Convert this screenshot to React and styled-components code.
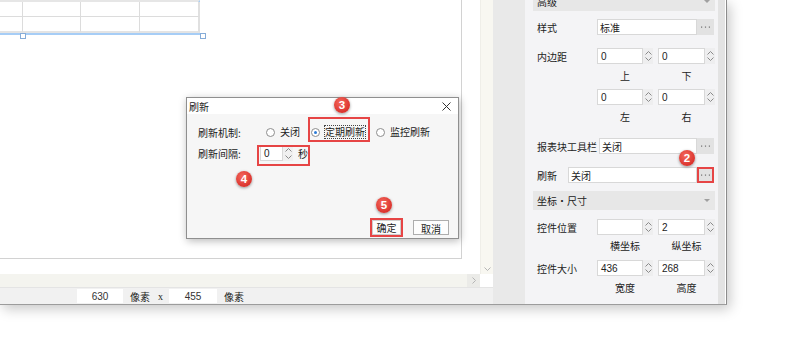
import React from 'react';
import styled, { createGlobalStyle } from 'styled-components';

const Global = createGlobalStyle`
  html, body { margin: 0; padding: 0; background: #fff; }
  body {
    font-family: "Noto Sans CJK SC", "Noto Sans", sans-serif;
    font-size: 10px;
    color: #222;
  }
  #root { width: 789px; height: 361px; overflow: hidden; position: relative; }
`;

const Window = styled.div`
  position: relative;
  display: flex;
  width: 727px;
  height: 305px;
  box-sizing: border-box;
  border-right: 1px solid #8c8c8c;
  border-bottom: 1px solid #9c9c9c;
  box-shadow: 3px 4px 12px rgba(0, 0, 0, 0.22);
  background: #fff;
`;

/* ---------- work area ---------- */
const Work = styled.div`
  width: 493px;
  display: flex;
  flex-direction: column;
`;
const WorkTop = styled.div`
  display: flex;
  height: 274px;
`;
const CanvasArea = styled.div`
  width: 480px;
  background: #fff;
`;
const CanvasBox = styled.div`
  position: relative;
  width: 462px;
  height: 259px;
  box-sizing: border-box;
  border-right: 1px solid #d2d2d2;
  border-bottom: 1px solid #d2d2d2;
`;
const VScroll = styled.div`
  width: 13px;
  box-sizing: border-box;
  background: #f8f7f1;
  border-left: 1px solid #efeee8;
  display: flex;
  flex-direction: column;
  justify-content: flex-end;
`;
const ScrollBtn = styled.div`
  height: ${p => p.$h || 11}px;
  width: ${p => p.$w ? p.$w + 'px' : 'auto'};
  display: flex;
  align-items: center;
  justify-content: center;
  background: ${p => p.$bg || 'transparent'};
`;
const HScrollRow = styled.div`
  display: flex;
  height: 13px;
`;
const HTrack = styled.div`
  width: 480px;
  background: #f4f4ef;
  display: flex;
  justify-content: flex-end;
`;
const Corner = styled.div`
  width: 13px;
  background: #fff;
`;
const StatusBar = styled.div`
  height: 17px;
  box-sizing: border-box;
  border-top: 1px solid #e4e4e4;
  background: #f1f1f1;
  display: flex;
  align-items: center;
  padding-left: 77px;
`;
const NumBox = styled.div`
  width: ${p => p.$w}px;
  height: 14px;
  background: #fff;
  font-family: "Liberation Sans", Arial, sans-serif;
  font-size: 10px;
  color: #333;
  display: flex;
  align-items: center;
  justify-content: center;
`;
const StatusText = styled.span`
  margin-left: ${p => p.$ml}px;
  font-family: ${p => p.$serif ? '"Liberation Serif", serif' : 'inherit'};
  color: #222;
`;

/* ---------- table widget on canvas ---------- */
const TableWrap = styled.div`
  position: relative;
  width: 200px;
`;
const Table = styled.div`
  display: grid;
  grid-template-columns: 23px 58px 59px 60px;
  grid-template-rows: 15px 16px;
  border-top: 2px solid #e6e6e6;
  border-right: 2px solid #a6cdf6;
  border-bottom: 2px solid #a6cdf6;
`;
const Cell = styled.div`
  box-sizing: border-box;
  border-right: ${p => p.$last ? '2px solid #e0e0e0' : '1px solid #dcdcdc'};
  border-bottom: ${p => p.$bottom ? '2px solid #e4e4e4' : '1px solid #dcdcdc'};
`;
const Handle = styled.div`
  position: absolute;
  left: ${p => p.$x}px;
  top: ${p => p.$y}px;
  width: 4px;
  height: 4px;
  border: 1px solid #86acd8;
  background: #fff;
`;

/* ---------- gray gutter & property panel ---------- */
const Gutter = styled.div`
  width: 32px;
  background: #e9e9e9;
`;
const Panel = styled.div`
  width: 193px;
  box-sizing: border-box;
  padding: 0 3px 0 8px;
  background: #f4f4f6;
  overflow: hidden;
`;
const PanelScroll = styled.div`
  width: 7px;
  background: #e3e3e3;
`;
const SectionHead = styled.div`
  margin-top: ${p => p.$mt}px;
  height: 19px;
  background: #e7e7e7;
  display: flex;
  align-items: center;
  justify-content: space-between;
  padding: 0 5px 0 4px;
  color: #222;
`;
const Tri = styled.span`
  width: 0;
  height: 0;
  border-left: 3px solid transparent;
  border-right: 3px solid transparent;
  border-top: 3px solid #a0a0a0;
`;
const Row = styled.div`
  margin-top: ${p => p.$mt}px;
  height: 16px;
  display: flex;
  align-items: center;
  padding-left: 4px;
`;
const Label = styled.span`
  width: ${p => p.$w}px;
  flex: none;
  white-space: nowrap;
  color: #222;
`;
const TextField = styled.div`
  width: ${p => p.$w}px;
  flex: none;
  height: 16px;
  box-sizing: border-box;
  background: #fff;
  border: 1px solid #d8d8d8;
  display: flex;
  align-items: center;
  padding-left: 2px;
  color: #222;
`;
const DotsBtn = styled.div`
  width: 17px;
  height: 16px;
  flex: none;
  box-sizing: border-box;
  background: #e2e2e2;
  border: ${p => p.$hl ? '2px solid #e64545' : 'none'};
  display: flex;
  align-items: center;
  justify-content: center;
`;
const SpinPair = styled.div`
  display: flex;
  gap: 5px;
`;
const SpinBox = styled.div`
  width: ${p => p.$w}px;
  height: ${p => p.$h || 16}px;
  display: flex;
`;
const SpinField = styled.div`
  flex: 1;
  box-sizing: border-box;
  background: #fff;
  border: 1px solid #d8d8d8;
  display: flex;
  align-items: center;
  padding-left: 3px;
  font-family: "Liberation Sans", Arial, sans-serif;
  font-size: 10px;
  color: #222;
`;
const SpinArrows = styled.div`
  width: 10px;
  display: flex;
  flex-direction: column;
  align-items: center;
  justify-content: space-evenly;
  background: ${p => p.$bg || '#eeeeef'};
`;
const SubRow = styled.div`
  margin-top: ${p => p.$mt}px;
  height: 12px;
  display: flex;
  gap: 5px;
  padding-left: 64px;
  align-items: center;
`;
const Sub = styled.span`
  width: ${p => p.$w}px;
  text-align: center;
  color: #222;
`;

/* ---------- dialog ---------- */
const Dialog = styled.div`
  position: absolute;
  left: 186px;
  top: 97px;
  width: 273px;
  height: 142px;
  box-sizing: border-box;
  border: 1px solid #8f8f8f;
  box-shadow: 1px 2px 8px rgba(0, 0, 0, 0.28);
  display: flex;
  flex-direction: column;
  background: #f6f6f6;
`;
const TitleBar = styled.div`
  height: 16px;
  background: #fff;
  display: flex;
  align-items: center;
  justify-content: space-between;
  padding: 0 7px 0 2px;
`;
const DBody = styled.div`
  flex: 1;
  display: flex;
  flex-direction: column;
  padding-left: 11px;
`;
const DRow = styled.div`
  margin-top: ${p => p.$mt}px;
  height: ${p => p.$h}px;
  display: flex;
  align-items: center;
`;
const RadioGroup = styled.div`
  display: flex;
  gap: 10px;
  align-items: center;
`;
const RadioItem = styled.label`
  display: flex;
  align-items: center;
  gap: 4px;
`;
const RadioCircle = styled.span`
  width: 9px;
  height: 9px;
  box-sizing: border-box;
  border-radius: 50%;
  border: 1px solid #8d8d8d;
  background: #fff;
  display: flex;
  align-items: center;
  justify-content: center;
  &::after {
    content: "";
    display: ${p => p.$on ? 'block' : 'none'};
    width: 3px;
    height: 3px;
    border-radius: 50%;
    background: #2b7bd6;
  }
`;
const RadioText = styled.span`
  padding: 0;
  border: 1px ${p => p.$focus ? 'dotted #444' : 'solid transparent'};
  line-height: 12px;
`;
const Unit = styled.span`
  margin-left: 5px;
`;
const Footer = styled.div`
  margin-top: auto;
  display: flex;
  justify-content: flex-end;
  align-items: center;
  gap: 10px;
  padding: 0 9px 1px 0;
`;
const Button = styled.button`
  font-family: inherit;
  font-size: 10px;
  color: #222;
  background: #fdfdfd;
  width: ${p => p.$w}px;
  height: ${p => p.$h}px;
  padding: 0;
  box-sizing: border-box;
  border: ${p => p.$hl ? '2px solid #e64545' : '1px solid #adadad'};
  box-shadow: ${p => p.$hl ? 'inset 0 0 0 1px #cfcfcf' : 'none'};
`;

/* ---------- annotations ---------- */
const Highlight = styled.div`
  position: absolute;
  left: ${p => p.$x}px;
  top: ${p => p.$y}px;
  width: ${p => p.$w}px;
  height: ${p => p.$h}px;
  box-sizing: border-box;
  border: 2px solid #e64545;
  pointer-events: none;
`;
const Badge = styled.div`
  position: absolute;
  left: ${p => p.$x - 8}px;
  top: ${p => p.$y - 8}px;
  width: 16px;
  height: 16px;
  border-radius: 50%;
  background: radial-gradient(circle at 40% 35%, #f4685d, #d9302a 75%);
  box-shadow: 0 1px 3px rgba(0, 0, 0, 0.4);
  color: #fff;
  font-family: "Liberation Sans", Arial, sans-serif;
  font-weight: bold;
  font-size: 11.5px;
  display: flex;
  align-items: center;
  justify-content: center;
`;

const Chevron = ({ up, color = '#8a8a8a' }) => (
  <svg width="7" height="4" viewBox="0 0 7 4">
    <path d={up ? 'M0.5 3.5 L3.5 0.5 L6.5 3.5' : 'M0.5 0.5 L3.5 3.5 L6.5 0.5'} fill="none" stroke={color} strokeWidth="1" />
  </svg>
);

const Dots = () => (
  <svg width="9" height="2" viewBox="0 0 9 2">
    <rect x="0" y="0.5" width="1.2" height="1.2" fill="#707070" />
    <rect x="3.9" y="0.5" width="1.2" height="1.2" fill="#707070" />
    <rect x="7.8" y="0.5" width="1.2" height="1.2" fill="#707070" />
  </svg>
);

const Spinner = ({ value, w = 56, h, bg }) => (
  <SpinBox $w={w} $h={h}>
    <SpinField>{value}</SpinField>
    <SpinArrows $bg={bg}>
      <Chevron up />
      <Chevron />
    </SpinArrows>
  </SpinBox>
);

const CloseX = () => (
  <svg width="9" height="9" viewBox="0 0 9 9">
    <path d="M0.5 0.5 L8.5 8.5 M8.5 0.5 L0.5 8.5" stroke="#333" strokeWidth="1" />
  </svg>
);

export default function App() {
  return (
    <>
      <Global />
      <Window>
        <Work>
          <WorkTop>
            <CanvasArea>
              <CanvasBox>
                <TableWrap>
                  <Table>
                    <Cell /><Cell /><Cell /><Cell $last />
                    <Cell $bottom /><Cell $bottom /><Cell $bottom /><Cell $bottom $last />
                  </Table>
                  <Handle $x={20} $y={33} />
                  <Handle $x={200} $y={33} />
                </TableWrap>
              </CanvasBox>
            </CanvasArea>
            <VScroll>
              <ScrollBtn $h={11}>
                <Chevron color="#b5b5b5" />
              </ScrollBtn>
            </VScroll>
          </WorkTop>
          <HScrollRow>
            <HTrack>
              <ScrollBtn $h={13} $w={13} $bg="#ebebe8">
                <svg width="4" height="7" viewBox="0 0 4 7">
                  <path d="M0.5 0.5 L3.5 3.5 L0.5 6.5" fill="none" stroke="#b5b5b5" strokeWidth="1" />
                </svg>
              </ScrollBtn>
            </HTrack>
            <Corner />
          </HScrollRow>
          <StatusBar>
            <NumBox $w={46}>630</NumBox>
            <StatusText $ml={7}>像素</StatusText>
            <StatusText $ml={8} $serif>x</StatusText>
            <StatusText $ml={6}><NumBox $w={48}>455</NumBox></StatusText>
            <StatusText $ml={7}>像素</StatusText>
          </StatusBar>
        </Work>
        <Gutter />
        <Panel>
          <SectionHead $mt={-8}>高级<Tri /></SectionHead>
          <Row $mt={8}>
            <Label $w={60}>样式</Label>
            <TextField $w={100}>标准</TextField>
            <DotsBtn><Dots /></DotsBtn>
          </Row>
          <Row $mt={13}>
            <Label $w={60}>内边距</Label>
            <SpinPair>
              <Spinner value="0" w={56} />
              <Spinner value="0" w={57} />
            </SpinPair>
          </Row>
          <SubRow $mt={5}><Sub $w={56}>上</Sub><Sub $w={57}>下</Sub></SubRow>
          <Row $mt={8}>
            <Label $w={60} />
            <SpinPair>
              <Spinner value="0" w={56} />
              <Spinner value="0" w={57} />
            </SpinPair>
          </Row>
          <SubRow $mt={5}><Sub $w={56}>左</Sub><Sub $w={57}>右</Sub></SubRow>
          <Row $mt={16}>
            <Label $w={62}>报表块工具栏</Label>
            <TextField $w={98}>关闭</TextField>
            <DotsBtn><Dots /></DotsBtn>
          </Row>
          <Row $mt={13}>
            <Label $w={31}>刷新</Label>
            <TextField $w={129}>关闭</TextField>
            <DotsBtn $hl><Dots /></DotsBtn>
          </Row>
          <SectionHead $mt={8}>坐标・尺寸<Tri /></SectionHead>
          <Row $mt={9}>
            <Label $w={60}>控件位置</Label>
            <SpinPair>
              <Spinner value="" w={56} />
              <Spinner value="2" w={57} />
            </SpinPair>
          </Row>
          <SubRow $mt={4}><Sub $w={56}>横坐标</Sub><Sub $w={57}>纵坐标</Sub></SubRow>
          <Row $mt={9}>
            <Label $w={60}>控件大小</Label>
            <SpinPair>
              <Spinner value="436" w={56} />
              <Spinner value="268" w={57} />
            </SpinPair>
          </Row>
          <SubRow $mt={5}><Sub $w={56}>宽度</Sub><Sub $w={57}>高度</Sub></SubRow>
        </Panel>
        <PanelScroll />

        <Dialog>
          <TitleBar>
            <span>刷新</span>
            <CloseX />
          </TitleBar>
          <DBody>
            <DRow $mt={11} $h={14}>
              <Label $w={68}>刷新机制:</Label>
              <RadioGroup>
                <RadioItem><RadioCircle /><RadioText>关闭</RadioText></RadioItem>
                <RadioItem><RadioCircle $on /><RadioText $focus>定期刷新</RadioText></RadioItem>
                <RadioItem><RadioCircle /><RadioText>监控刷新</RadioText></RadioItem>
              </RadioGroup>
            </DRow>
            <DRow $mt={7} $h={15}>
              <Label $w={62}>刷新间隔:</Label>
              <Spinner value="0" w={33} h={15} bg="#f0f0f0" />
              <Unit>秒</Unit>
            </DRow>
            <Footer>
              <Button $w={33} $h={19} $hl>确定</Button>
              <Button $w={36} $h={15}>取消</Button>
            </Footer>
          </DBody>
        </Dialog>

        <Highlight $x={308} $y={117} $w={62} $h={25} />
        <Highlight $x={257} $y={145} $w={53} $h={21} />
        <Badge $x={687} $y={158}>2</Badge>
        <Badge $x={342} $y={105}>3</Badge>
        <Badge $x={244} $y={179}>4</Badge>
        <Badge $x={384} $y={205}>5</Badge>
      </Window>
    </>
  );
}
